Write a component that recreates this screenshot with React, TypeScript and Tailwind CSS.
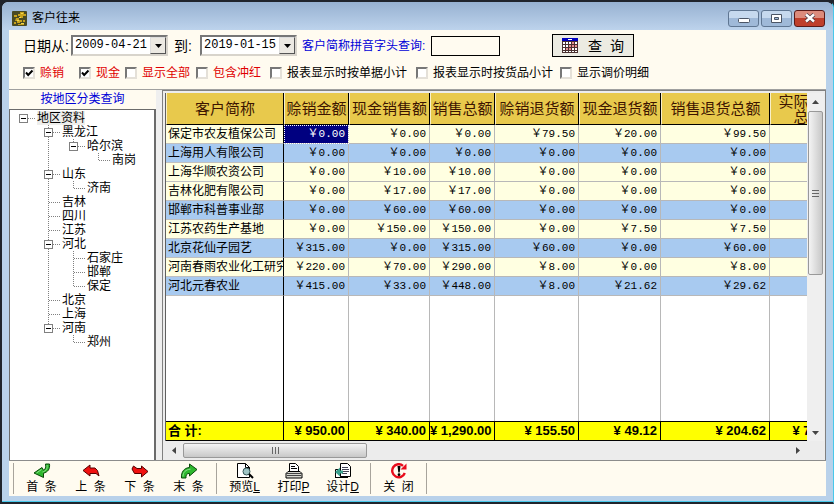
import React, { useState } from 'react';

type Region = { name: string; children?: Region[] };

const regions: Region = {
  name: '地区资料',
  children: [
    { name: '黑龙江', children: [{ name: '哈尔滨', children: [{ name: '南岗' }] }] },
    { name: '山东', children: [{ name: '济南' }] },
    { name: '吉林' },
    { name: '四川' },
    { name: '江苏' },
    { name: '河北', children: [{ name: '石家庄' }, { name: '邯郸' }, { name: '保定' }] },
    { name: '北京' },
    { name: '上海' },
    { name: '河南', children: [{ name: '郑州' }] },
  ],
};

const columns = [
  { title: '客户简称', width: 'w-[118px]' },
  { title: '赊销金额', width: 'w-[65px]' },
  { title: '现金销售额', width: 'w-[81px]' },
  { title: '销售总额', width: 'w-[65px]' },
  { title: '赊销退货额', width: 'w-[84px]' },
  { title: '现金退货额', width: 'w-[82px]' },
  { title: '销售退货总额', width: 'w-[109px]' },
];

const rows = [
  { name: '保定市农友植保公司', values: ['0.00', '0.00', '0.00', '79.50', '20.00', '99.50'] },
  { name: '上海用人有限公司', values: ['0.00', '0.00', '0.00', '0.00', '0.00', '0.00'], blue: true },
  { name: '上海华顺农资公司', values: ['0.00', '10.00', '10.00', '0.00', '0.00', '0.00'] },
  { name: '吉林化肥有限公司', values: ['0.00', '17.00', '17.00', '0.00', '0.00', '0.00'] },
  { name: '邯郸市科普事业部', values: ['0.00', '60.00', '60.00', '0.00', '0.00', '0.00'], blue: true },
  { name: '江苏农药生产基地', values: ['0.00', '150.00', '150.00', '0.00', '7.50', '7.50'] },
  { name: '北京花仙子园艺', values: ['315.00', '0.00', '315.00', '60.00', '0.00', '60.00'], blue: true },
  { name: '河南春雨农业化工研究所', values: ['220.00', '70.00', '290.00', '8.00', '0.00', '8.00'] },
  { name: '河北元春农业', values: ['415.00', '33.00', '448.00', '8.00', '21.62', '29.62'], blue: true },
];

const totals = ['950.00', '340.00', '1,290.00', '155.50', '49.12', '204.62', '794.50'];

const filters = [
  { label: '赊销', checked: true, red: true, width: 'w-[56px]' },
  { label: '现金', checked: true, red: true, width: 'w-[46px]' },
  { label: '显示全部', checked: false, red: true, width: 'w-[71px]' },
  { label: '包含冲红', checked: false, red: true, width: 'w-[74px]' },
  { label: '报表显示时按单据小计', checked: false, red: false, width: 'w-[146px]' },
  { label: '报表显示时按货品小计', checked: false, red: false, width: 'w-[144px]' },
  { label: '显示调价明细', checked: false, red: false, width: 'w-[96px]' },
];

// ---------- Icons ----------

function AppIcon() {
  return (
    <svg width="15" height="15" viewBox="0 0 15 15">
      <rect width="15" height="15" rx="1" fill="#4a4a22" />
      <path d="M8 1h4v2h2v2h-3v2H8V5H6V3h2zM2 4h3v2H2zM4 7h3v2h3v2H8v1H5v-2H3zM2 11h2v2H2zM6 13h6v1H6zM11 9h2v2h-2z" fill="#c8a21c" />
      <path d="M9 2h2v1H9zM7 6h2v1H7zM5 9h2v1H5zM9 12h3v1H9z" fill="#f0d84c" />
    </svg>
  );
}

function CalendarIcon() {
  return (
    <svg width="16" height="15" viewBox="0 0 16 15" shapeRendering="crispEdges">
      <rect width="16" height="15" fill="#fff" />
      <path d="M0 3.500h16M0 6.500h16M0 9.500h16M0 12.500h16M.5 3v12M3.500 3v12M6.500 3v12M9.500 3v12M12.500 3v12M15.500 3v12M0 14.500h16" stroke="#4a3030" fill="none" />
      <path d="M7 7h2v2H7zM10 4h2v2h-2zM10 7h2v2h-2zM4 10h2v2H4zM7 10h2v2H7zM13 7h2v2h-2z" fill="#e89090" />
      <rect width="16" height="3" fill="#0000c0" />
      <path d="M6 1h4v1H6z" fill="#fff" />
    </svg>
  );
}

function FirstIcon() {
  return (
    <svg width="18" height="16" viewBox="0 0 18 16">
      <path d="M12.500 1h4c.6 5-1.500 8-6 9.200V14.500L1 10l8-5.500 1.500 2.700c2-.9 2.700-3 2-6.200z" fill="#2eb82e" stroke="#0a4a0a" />
      <path d="M14 2c.6 3.500-.8 6-4.500 7M3.500 10 8.500 6.500" stroke="#8ee08e" fill="none" />
    </svg>
  );
}

function PrevIcon() {
  return (
    <svg width="18" height="16" viewBox="0 0 18 16">
      <path d="M1 7.500 8 2v3h5l2.500 2.500L17 13l-3-2.500H8V13z" fill="#f01010" stroke="#500" strokeLinejoin="round" />
    </svg>
  );
}

function NextIcon() {
  return (
    <svg width="18" height="16" viewBox="0 0 18 16">
      <path d="M17 8.500 10.500 3v2.500H6L2.500 3 1 6l2.500 4.500h7V14z" fill="#f01010" stroke="#500" strokeLinejoin="round" />
    </svg>
  );
}

function LastIcon() {
  return (
    <svg width="18" height="16" viewBox="0 0 18 16">
      <path d="M1.500 15H6c-.4-3 .8-4.500 3.500-4.700V13L17 6.500 9.500 1v3.500C4 5 1 9 1.500 15z" fill="#2eb82e" stroke="#0a4a0a" />
      <path d="M3 13.500c0-4 2.500-7 7.500-7.300" stroke="#8ee08e" fill="none" />
    </svg>
  );
}

function PreviewIcon() {
  return (
    <svg width="18" height="16" viewBox="0 0 18 16">
      <path d="M1.500.500h8l4 4v10h-12z" fill="#fff" stroke="#000" />
      <path d="M9.500.500v4h4" fill="none" stroke="#000" />
      <circle cx="10.500" cy="8.500" r="3.500" fill="#9fc4c4" stroke="#355" />
      <path d="m13 11 4 4" stroke="#000" strokeWidth="2" />
    </svg>
  );
}

function PrintIcon() {
  return (
    <svg width="18" height="16" viewBox="0 0 18 16">
      <path d="M4.500 8.500v-8h6l3 3v5z" fill="#fff" stroke="#000" />
      <path d="M6 3.500h4M6 5.500h6" stroke="#000" />
      <path d="M3 8.500h12l2 2v4.500H1v-4.500z" fill="#d8d8d0" stroke="#000" />
      <path d="M1 10.500h16M2 12.500h14" stroke="#444" />
    </svg>
  );
}

function DesignIcon() {
  return (
    <svg width="18" height="16" viewBox="0 0 18 16">
      <path d="M1.500 6.500h5v8h-5z" fill="#fff" stroke="#000" />
      <path d="M6.500.500h7l3 3v10h-10z" fill="#fff" stroke="#000" />
      <path d="M8 4.500h6M8 6.500h7M8 8.500h7M8 10.500h5" stroke="#445" />
      <path d="m1 9 5-4.500v3h3v3H6v3z" fill="#3aa08c" />
      <path d="M1 14.500h13" stroke="#000" />
    </svg>
  );
}

function CloseIcon() {
  return (
    <svg width="18" height="16" viewBox="0 0 18 16">
      <path d="M13 2.800A6.500 6.500 0 1 0 14.800 10" fill="none" stroke="#e80c1c" strokeWidth="2.400" />
      <path d="M10.500 6.500h6V.500z" fill="#e80c1c" />
      <path d="M7.500 3h3L9.700 9.500H8.300z" fill="#000" />
      <circle cx="9" cy="11.700" r="1.400" fill="#000" />
    </svg>
  );
}

// ---------- Title bar ----------

function TitleBar() {
  const base = 'flex h-[17px] w-[31px] items-center justify-center rounded-[3px] border';
  return (
    <header className="flex h-[28px] shrink-0 items-center justify-between rounded-t-md bg-linear-to-b from-[#97b1d1] to-[#bdd3ec] pl-[10px] pr-[8px] pt-[4px]">
      <div className="flex items-center gap-[5px]">
        <AppIcon />
        <h1 className="text-xs">客户往来</h1>
      </div>
      <div className="flex gap-[2px]">
        <button aria-label="最小化" className={`${base} border-[#5f7692] bg-linear-to-b from-[#c6d9ee] from-50% to-[#9fb9d8] to-50%`}>
          <svg width="12" height="9" viewBox="0 0 12 9"><rect x=".5" y="4.500" width="11" height="4" rx="1" fill="#fff" stroke="#4b5565" /></svg>
        </button>
        <button aria-label="最大化" className={`${base} border-[#5f7692] bg-linear-to-b from-[#c6d9ee] from-50% to-[#9fb9d8] to-50%`}>
          <svg width="12" height="9" viewBox="0 0 12 9"><path d="M.5.500h10v8H.5zM3.500 3.500v2h4v-2z" fill="#fff" fillRule="evenodd" stroke="#4b5565" /></svg>
        </button>
        <button aria-label="关闭窗口" className={`${base} border-[#5a1a18] bg-linear-to-b from-[#dc8b7c] from-50% to-[#bf3f2c] to-50%`}>
          <svg width="12" height="10" viewBox="0 0 12 10">
            <path d="m2 1.500 8 7m0-7-8 7" stroke="#4b3a45" strokeWidth="4" />
            <path d="m2 1.500 8 7m0-7-8 7" stroke="#fff" strokeWidth="2.400" />
          </svg>
        </button>
      </div>
    </header>
  );
}

// ---------- Query form ----------

function DateSelect({ id, value }: { id: string; value: string }) {
  return (
    <div className="relative h-[21px] w-[97px] border-2 border-[#d8d4cc] border-l-[#777] border-t-[#777] bg-white">
      <select id={id} defaultValue={value} className="block h-full w-full appearance-none pl-[2px] font-['Liberation_Mono',monospace] text-xs leading-[17px] outline-none">
        <option>{value}</option>
      </select>
      <span className="pointer-events-none absolute inset-y-0 right-0 flex w-[16px] items-center justify-center border border-r-[#555] border-b-[#555] border-l-[#ddd] border-t-[#ddd] bg-[#ece9e2]">
        <svg width="7" height="4" viewBox="0 0 7 4"><path d="M0 0h7L3.500 4z" /></svg>
      </span>
    </div>
  );
}

function QueryForm() {
  return (
    <form className="shrink-0 pl-[14px] pt-[4px]" onSubmit={(e) => e.preventDefault()}>
      <div className="flex h-[23px] items-center">
        <label htmlFor="from" className="w-[48px] text-sm leading-none whitespace-nowrap">日期从:</label>
        <DateSelect id="from" value="2009-04-21" />
        <label htmlFor="to" className="w-[32px] pl-[6px] text-sm leading-none whitespace-nowrap">到:</label>
        <DateSelect id="to" value="2019-01-15" />
        <label htmlFor="pinyin" className="w-[134px] pl-[5px] text-xs whitespace-nowrap text-[#0000d8]">客户简称拼音字头查询:</label>
        <input id="pinyin" type="text" className="h-[20px] w-[69px] border border-black bg-[#fffbf0] px-1 text-xs outline-none" />
        <button type="submit" className="ml-[52px] flex h-[23px] w-[82px] items-center justify-center gap-[10px] border border-black bg-[#ecebe2] text-sm leading-none">
          <CalendarIcon />
          <span>查&nbsp;&nbsp;询</span>
        </button>
      </div>
      <div className="flex h-[32px] items-center">
        {filters.map((filter) => (
          <label key={filter.label} className={`${filter.width} flex shrink-0 items-center gap-[5px] text-xs whitespace-nowrap ${filter.red ? 'text-[#e00000]' : 'text-black'}`}>
            <span className="grid">
              <input type="checkbox" defaultChecked={filter.checked} className="peer col-start-1 row-start-1 size-[12px] appearance-none border-2 border-[#e4e0d8] border-l-[#777] border-t-[#777] bg-white" />
              <svg className="pointer-events-none invisible col-start-1 row-start-1 size-[12px] peer-checked:visible" viewBox="0 0 12 12">
                <path d="m3 5.500 2.200 2.500L9.500 3.500" fill="none" stroke="#000" strokeWidth="2" />
              </svg>
            </span>
            {filter.label}
          </label>
        ))}
      </div>
    </form>
  );
}

// ---------- Region tree ----------

// One 25px step of dotted connector lines
function Guide({ vertical, branch }: { vertical: 'full' | 'half' | 'none'; branch: boolean }) {
  return (
    <svg width="25" height="14" viewBox="0 0 25 14" className="shrink-0" shapeRendering="crispEdges">
      {vertical !== 'none' && <path d={vertical === 'full' ? 'M11.500 0v14' : 'M11.500 0v7'} stroke="#808080" strokeDasharray="1 1" />}
      {branch && <path d="M12 7.500h12" stroke="#808080" strokeDasharray="1 1" />}
    </svg>
  );
}

function TreeNode({ node, trail, last, root }: { node: Region; trail: boolean[]; last: boolean; root?: boolean }) {
  const [open, setOpen] = useState(true);

  return (
    <li>
      <div className="flex h-[14px] items-center">
        {trail.map((line, i) => (
          <Guide key={i} vertical={line ? 'full' : 'none'} branch={false} />
        ))}
        <span className="relative">
          <Guide vertical={root ? 'none' : last ? 'half' : 'full'} branch />
          {node.children && (
            <button
              aria-label={`${open ? '折叠' : '展开'}${node.name}`}
              onClick={() => setOpen(!open)}
              className="absolute left-[7px] top-[3px] flex size-[9px] items-center justify-center border border-[#808080] bg-white"
            >
              <svg width="5" height="5" viewBox="0 0 5 5" shapeRendering="crispEdges">
                <path d={open ? 'M0 2.500h5' : 'M0 2.500h5M2.500 0v5'} stroke="#000" />
              </svg>
            </button>
          )}
        </span>
        <span className={`text-xs leading-[14px] whitespace-nowrap ${root ? 'bg-[#eeeeec]' : ''}`}>{node.name}</span>
      </div>
      {node.children && open && (
        <ul>
          {node.children.map((child, i) => (
            <TreeNode key={child.name} node={child} trail={[...trail, !last]} last={i === node.children!.length - 1} />
          ))}
        </ul>
      )}
    </li>
  );
}

function RegionPanel() {
  return (
    <aside className="flex w-[147px] shrink-0 flex-col">
      <h2 className="h-[19px] text-center text-xs leading-[19px] text-[#0000d8]">按地区分类查询</h2>
      <ul className="flex-1 overflow-hidden border-l border-t border-r-2 border-[#6b6b6b] bg-white pl-[2px] pt-[1px]">
        <TreeNode node={regions} trail={[]} last root />
      </ul>
    </aside>
  );
}

// ---------- Customer grid ----------

function CustomerTable() {
  const head = 'border-r border-b border-black border-l border-l-[#f8efc8] bg-[#e8c94c] p-0 text-[15px] leading-[15px] font-normal text-[#3c1400] whitespace-nowrap';

  return (
    <table className="h-full w-full min-w-[681px] table-fixed border-separate border-spacing-0">
      <thead>
        <tr className="h-[32px]">
          {columns.map((col) => (
            <th key={col.title} className={`${head} ${col.width}`}>{col.title}</th>
          ))}
          <th className={head}>实际赊销<br />总额</th>
        </tr>
      </thead>
      <tbody>
        {rows.map((row, r) => (
          <tr key={row.name} className={`h-[19px] ${row.blue ? 'bg-[#a8caf0]' : 'bg-[#ffffe1]'}`}>
            <td className="overflow-hidden border-r border-b border-r-black border-b-[#c0c0c0] p-0 pl-[2px] text-xs leading-[18px] whitespace-nowrap">{row.name}</td>
            {row.values.map((value, c) => (
              <td
                key={c}
                className={`border-r border-b border-[#b8b8b8] p-0 pr-[3px] text-right font-['Liberation_Mono','Noto_Sans_CJK_SC',monospace] text-[11px] leading-[18px] whitespace-nowrap ${
                  r === 0 && c === 0 ? 'bg-[#000080] text-white outline-1 -outline-offset-1 outline-dotted outline-white' : ''
                }`}
              >
                ￥{value}
              </td>
            ))}
            <td className="border-r border-b border-[#b8b8b8] p-0"></td>
          </tr>
        ))}
        {/* Empty part of the grid takes the height that is left */}
        <tr className="bg-white">
          <td className="border-r border-black p-0"></td>
          {totals.map((total) => (
            <td key={total} className="border-r border-[#b8b8b8] p-0"></td>
          ))}
        </tr>
      </tbody>
      <tfoot>
        <tr className="h-[20px] bg-[#ffff00]">
          <th scope="row" className="border-y border-r border-black p-0 pl-[2px] text-left text-[13px] leading-[18px] font-bold">合 计:</th>
          {totals.map((total) => (
            <td key={total} className="border-y border-r border-black p-0 pr-[3px] text-right font-['Liberation_Sans',sans-serif] text-[13px] leading-[18px] font-bold whitespace-nowrap">¥ {total}</td>
          ))}
        </tr>
      </tfoot>
    </table>
  );
}

function CustomerGrid() {
  return (
    <section className="flex min-w-0 flex-1 flex-col border-l border-t border-r border-[#808080] bg-[#ececec] pl-[2px] pt-[2px] pr-[1px]">
      <div className="flex min-h-0 flex-1">
        <div className="min-w-0 flex-1 overflow-hidden border-l border-[#606060] bg-white">
          <CustomerTable />
        </div>
        {/* Vertical scroll bar */}
        <div className="flex w-[17px] flex-col items-center bg-[#efefef]">
          <button aria-label="向上滚动" className="flex h-[18px] w-full items-center justify-center">
            <svg width="7" height="4" viewBox="0 0 7 4"><path d="M0 4h7L3.500 0z" fill="#444" /></svg>
          </button>
          <div className="flex h-[164px] w-[15px] flex-col items-center justify-center gap-[2px] rounded-[2px] border border-[#999] bg-linear-to-r from-[#f4f4f4] to-[#c8c8c8]">
            <span className="h-px w-[7px] bg-[#666]"></span>
            <span className="h-px w-[7px] bg-[#666]"></span>
            <span className="h-px w-[7px] bg-[#666]"></span>
          </div>
          <button aria-label="向下滚动" className="mt-auto flex h-[17px] w-full items-center justify-center">
            <svg width="7" height="4" viewBox="0 0 7 4"><path d="M0 0h7L3.500 4z" fill="#444" /></svg>
          </button>
        </div>
      </div>
      {/* Horizontal scroll bar */}
      <div className="flex h-[19px] shrink-0 items-center pr-[17px]">
        <button aria-label="向左滚动" className="flex h-full w-[18px] items-center justify-center">
          <svg width="4" height="7" viewBox="0 0 4 7"><path d="M4 0v7L0 3.500z" fill="#444" /></svg>
        </button>
        <div className="flex h-[15px] w-[184px] items-center justify-center gap-[2px] rounded-[2px] border border-[#999] bg-linear-to-b from-[#f4f4f4] to-[#c8c8c8]">
          <span className="h-[7px] w-px bg-[#666]"></span>
          <span className="h-[7px] w-px bg-[#666]"></span>
          <span className="h-[7px] w-px bg-[#666]"></span>
        </div>
        <button aria-label="向右滚动" className="ml-auto flex h-full w-[18px] items-center justify-center">
          <svg width="4" height="7" viewBox="0 0 4 7"><path d="M0 0v7L4 3.500z" fill="#444" /></svg>
        </button>
      </div>
    </section>
  );
}

// ---------- Bottom tool bar ----------

function ToolButton({ icon, children }: { icon: React.ReactNode; children: React.ReactNode }) {
  return (
    <button className="flex w-[49px] flex-col items-center text-xs leading-[16px] whitespace-nowrap">
      {icon}
      <span>{children}</span>
    </button>
  );
}

function Separator() {
  return <span className="mx-[3px] h-[31px] w-px bg-[#a8a49c]"></span>;
}

function ToolBar() {
  return (
    <footer className="flex h-[36px] shrink-0 items-center border-t border-[#8c8c8c] pl-[1px]">
      <Separator />
      <ToolButton icon={<FirstIcon />}>首&nbsp;&nbsp;条</ToolButton>
      <ToolButton icon={<PrevIcon />}>上&nbsp;&nbsp;条</ToolButton>
      <ToolButton icon={<NextIcon />}>下&nbsp;&nbsp;条</ToolButton>
      <ToolButton icon={<LastIcon />}>末&nbsp;&nbsp;条</ToolButton>
      <Separator />
      <ToolButton icon={<PreviewIcon />}>预览<u>L</u></ToolButton>
      <ToolButton icon={<PrintIcon />}>打印<u>P</u></ToolButton>
      <ToolButton icon={<DesignIcon />}>设计<u>D</u></ToolButton>
      <Separator />
      <ToolButton icon={<CloseIcon />}>关&nbsp;&nbsp;闭</ToolButton>
      <Separator />
    </footer>
  );
}

export default function App() {
  return (
    <div className="h-screen bg-[#20242c]">
      <div className="flex h-full flex-col overflow-hidden rounded-t-lg border-2 border-r border-[#20242c] border-r-[#48c8ea] bg-[#b9d1ea] font-['Liberation_Sans','Noto_Sans_CJK_SC',sans-serif] text-black shadow-[inset_0_-1px_#48c8ea]">
        <TitleBar />
        <main className="mb-[6px] ml-[7px] mr-[7px] flex min-h-0 flex-1 flex-col bg-[#fffbf0]">
          <QueryForm />
          <div className="flex min-h-0 flex-1 border-t border-[#a0a0a0]">
            <RegionPanel />
            <div className="w-[6px] shrink-0 bg-[#efefef]"></div>
            <CustomerGrid />
          </div>
          <ToolBar />
        </main>
      </div>
    </div>
  );
}
